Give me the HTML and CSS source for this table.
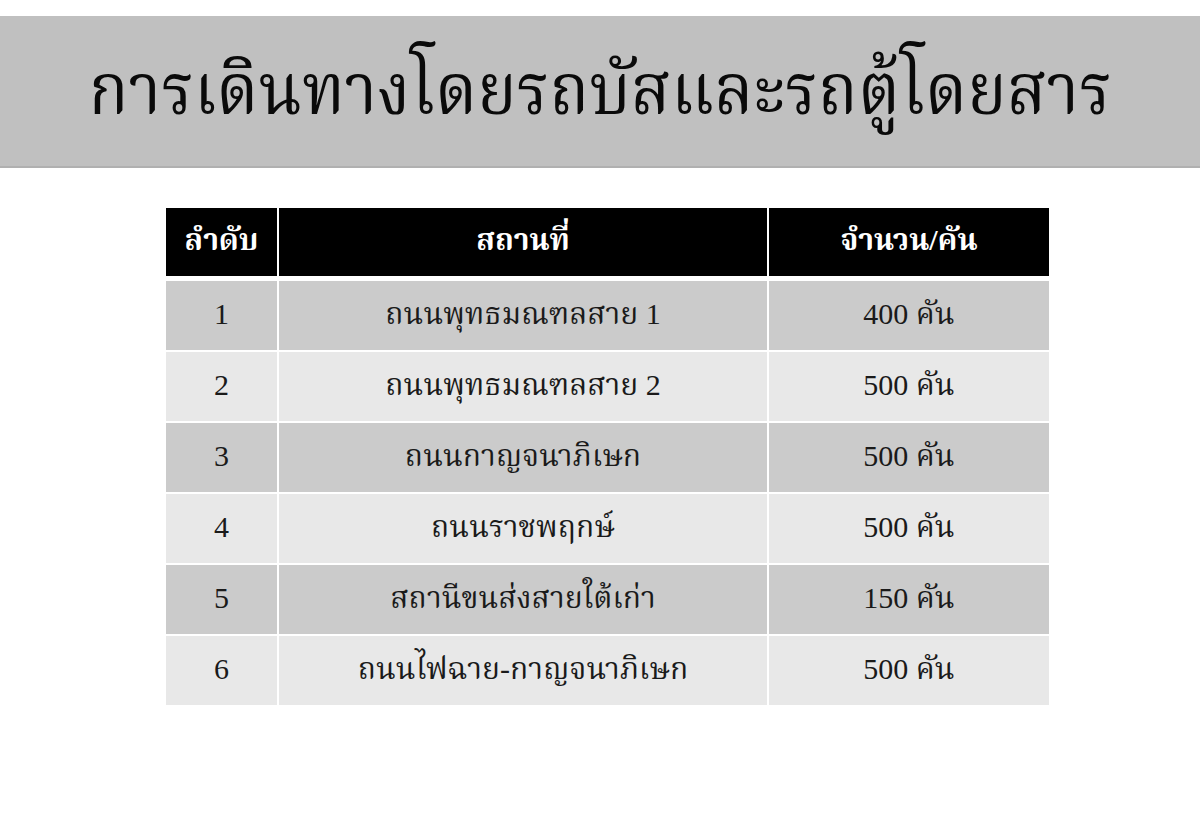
FILE: index.html
```html
<!DOCTYPE html>
<html lang="th">
<head>
<meta charset="utf-8">
<title>การเดินทางโดยรถบัสและรถตู้โดยสาร</title>
<link rel="stylesheet" href="styles.css">
</head>
<body>
<div class="slide">
  <header class="title-band">
    <h1 class="title">การเดินทางโดยรถบัสและรถตู้โดยสาร</h1>
  </header>
  <div class="table">
    <div class="row head">
      <div class="cell c1">ลำดับ</div>
      <div class="cell c2">สถานที่</div>
      <div class="cell c3">จำนวน/คัน</div>
    </div>
    <div class="row odd">
      <div class="cell c1">1</div>
      <div class="cell c2">ถนนพุทธมณฑลสาย 1</div>
      <div class="cell c3">400 คัน</div>
    </div>
    <div class="row even">
      <div class="cell c1">2</div>
      <div class="cell c2">ถนนพุทธมณฑลสาย 2</div>
      <div class="cell c3">500 คัน</div>
    </div>
    <div class="row odd">
      <div class="cell c1">3</div>
      <div class="cell c2">ถนนกาญจนาภิเษก</div>
      <div class="cell c3">500 คัน</div>
    </div>
    <div class="row even">
      <div class="cell c1">4</div>
      <div class="cell c2">ถนนราชพฤกษ์</div>
      <div class="cell c3">500 คัน</div>
    </div>
    <div class="row odd">
      <div class="cell c1">5</div>
      <div class="cell c2">สถานีขนส่งสายใต้เก่า</div>
      <div class="cell c3">150 คัน</div>
    </div>
    <div class="row even">
      <div class="cell c1">6</div>
      <div class="cell c2">ถนนไฟฉาย-กาญจนาภิเษก</div>
      <div class="cell c3">500 คัน</div>
    </div>
  </div>
</div>
</body>
</html>
```
FILE: styles.css
```css
* { box-sizing: border-box; }
html, body {
  margin: 0;
  padding: 0;
  background: #ffffff;
}
body {
  font-family: "Liberation Serif", "Noto Serif Thai", "Noto Sans Thai", serif;
  color: #111111;
}
.slide {
  width: 1200px;
  height: 832px;
  padding-top: 16px;
}
.title-band {
  height: 152px;
  background: #c0c0c0;
  border-bottom: 2px solid #b0b0b0;
  display: flex;
  align-items: center;
  justify-content: center;
}
.title {
  margin: 0;
  font-weight: normal;
  font-size: 72px;
  line-height: 1;
  color: #0a0a0a;
  padding-bottom: 2px;
  transform: scaleX(0.915);
  white-space: nowrap;
}
.table {
  margin: 40px 0 0 166px;
  width: 883px;
  display: flex;
  flex-direction: column;
  gap: 2px;
}
.row {
  display: grid;
  grid-template-columns: 111px 488px 280px;
  column-gap: 2px;
  height: 69px;
}
.row.head {
  height: 68px;
  margin-bottom: 3px;
}
.cell {
  display: flex;
  align-items: center;
  justify-content: center;
  font-size: 30px;
  line-height: 1;
  color: #1a1a1a;
  padding-bottom: 3px;
}
.head .cell {
  background: #000000;
  color: #ffffff;
  font-weight: bold;
  padding-bottom: 4px;
}
.odd .cell { background: #cbcbcb; }
.even .cell { background: #e8e8e8; }
```
